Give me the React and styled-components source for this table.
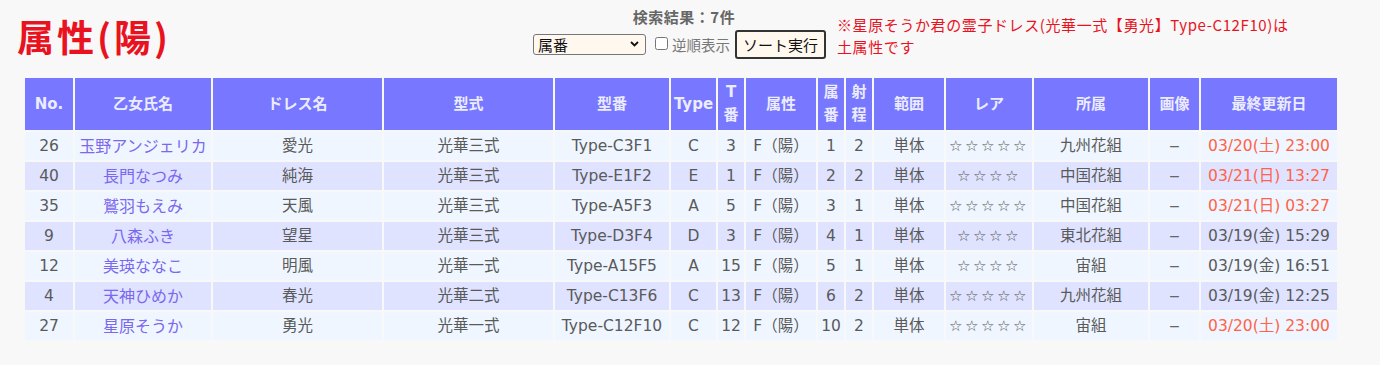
import styled, { createGlobalStyle } from "styled-components";

const headerColor = "#7777ff";
const headerText = "#ececff";
const rowLight = "#eff6ff";
const rowDark = "#dfe3ff";
const cellText = "#5a5a5a";
const nameColor = "#7b68ee";
const dateRed = "#ff6347";
const noteRed = "#e8131f";

const GlobalStyle = createGlobalStyle`
  * { box-sizing: border-box; }
  body {
    margin: 0;
    background: #f8f8f8;
    font-family: "DejaVu Sans", "Noto Sans CJK JP", sans-serif;
  }
`;

const Root = styled.div`
  width: 1380px;
  height: 365px;
  overflow: hidden;
`;

const TopBar = styled.div`
  display: flex;
  height: 76px;
`;

const TitleBox = styled.div`
  width: 533px;
  padding: 13px 0 0 17px;
`;

const Title = styled.h1`
  margin: 0;
  font-family: "Noto Sans CJK JP", sans-serif;
  font-size: 37px;
  line-height: 46px;
  letter-spacing: 3px;
  font-weight: 700;
  color: ${noteRed};
`;

const Controls = styled.div`
  width: 296px;
  display: flex;
  flex-direction: column;
  align-items: center;
  padding-top: 6px;
`;

const ResultCount = styled.div`
  font-family: "Noto Sans CJK JP", sans-serif;
  font-size: 15px;
  line-height: 21px;
  letter-spacing: 0.5px;
  font-weight: 700;
  color: #666;
  padding-left: 6px;
`;

const SortRow = styled.div`
  width: 100%;
  display: flex;
  align-items: center;
  margin-top: 3px;
`;

const SelectWrap = styled.div`
  position: relative;
  width: 113px;
  height: 21px;
  svg {
    position: absolute;
    right: 7px;
    top: 7px;
    pointer-events: none;
  }
`;

const SortSelect = styled.select`
  appearance: none;
  -webkit-appearance: none;
  width: 100%;
  height: 100%;
  padding: 0 0 0 4px;
  border: 1px solid #777;
  border-radius: 3px;
  background: #fff8ef;
  font-family: "Noto Sans CJK JP", sans-serif;
  font-size: 15px;
  line-height: 19px;
  color: #111;
`;

const CheckLabel = styled.label`
  display: flex;
  align-items: center;
  margin-left: 9px;
  font-family: "Noto Sans CJK JP", sans-serif;
  font-size: 14.5px;
  color: #777;
  input {
    width: 13px;
    height: 13px;
    margin: 0 4px 2px 0;
  }
`;

const SortButton = styled.button`
  margin-left: 5px;
  height: 29px;
  padding: 0 6px;
  border: 2px solid #333;
  border-radius: 3px;
  background: #fff8ef;
  font-family: "Noto Sans CJK JP", sans-serif;
  font-size: 15px;
  color: #111;
`;

const Note = styled.div`
  width: 490px;
  margin-left: 8px;
  padding-top: 14px;
  font-family: "Noto Sans CJK JP", sans-serif;
  font-size: 15px;
  line-height: 22px;
  letter-spacing: 0.6px;
  color: ${noteRed};
`;

const Table = styled.table`
  margin-left: 23px;
  width: 1316px;
  table-layout: fixed;
  border-collapse: separate;
  border-spacing: 2px;
`;

const Th = styled.th`
  width: ${(p) => p.$w}px;
  height: 52px;
  padding: 3px 2px;
  background: ${headerColor};
  color: ${headerText};
  font-size: 15px;
  line-height: 23px;
  font-weight: 700;
  text-align: center;
  font-family: "DejaVu Sans", "Noto Sans CJK JP", sans-serif;
`;

const Row = styled.tr`
  background: ${(p) => (p.$odd ? rowDark : rowLight)};
`;

const Td = styled.td`
  height: 28px;
  padding: 0 1px;
  font-size: 15.5px;
  line-height: 20px;
  text-align: center;
  white-space: nowrap;
  overflow: visible;
  color: ${(p) => p.$color || cellText};
`;

const Name = styled.span`
  font-family: "Noto Sans CJK JP", sans-serif;
  font-size: 16px;
  color: ${nameColor};
`;

const Stars = styled.span`
  font-family: "DejaVu Sans", sans-serif;
  font-size: 15px;
  letter-spacing: 2.6px;
  color: #555;
`;

const Dash = styled.span`
  font-family: "DejaVu Sans", sans-serif;
  font-size: 14px;
  color: #666;
`;

const columns = [
  ["No.", 48],
  ["乙女氏名", 136],
  ["ドレス名", 169],
  ["型式", 169],
  ["型番", 114],
  ["Type", 45],
  ["T番", 26],
  ["属性", 70],
  ["属番", 26],
  ["射程", 26],
  ["範囲", 70],
  ["レア", 86],
  ["所属", 114],
  ["画像", 49],
  ["最終更新日", 136],
];

const rows = [
  [26, "玉野アンジェリカ", "愛光", "光華三式", "Type-C3F1", "C", 3, 1, 2, 5, "九州花組", "03/20(土) 23:00", true],
  [40, "長門なつみ", "純海", "光華三式", "Type-E1F2", "E", 1, 2, 2, 4, "中国花組", "03/21(日) 13:27", true],
  [35, "鷲羽もえみ", "天風", "光華三式", "Type-A5F3", "A", 5, 3, 1, 5, "中国花組", "03/21(日) 03:27", true],
  [9, "八森ふき", "望星", "光華三式", "Type-D3F4", "D", 3, 4, 1, 4, "東北花組", "03/19(金) 15:29", false],
  [12, "美瑛ななこ", "明風", "光華一式", "Type-A15F5", "A", 15, 5, 1, 4, "宙組", "03/19(金) 16:51", false],
  [4, "天神ひめか", "春光", "光華二式", "Type-C13F6", "C", 13, 6, 2, 5, "九州花組", "03/19(金) 12:25", false],
  [27, "星原そうか", "勇光", "光華一式", "Type-C12F10", "C", 12, 10, 2, 5, "宙組", "03/20(土) 23:00", true],
];

export default function App() {
  return (
    <Root>
      <GlobalStyle />
      <TopBar>
        <TitleBox>
          <Title>属性(陽)</Title>
        </TitleBox>
        <Controls>
          <ResultCount>検索結果：7件</ResultCount>
          <SortRow>
            <SelectWrap>
              <SortSelect defaultValue="zokuban">
                <option value="zokuban">属番</option>
              </SortSelect>
              <svg width="9" height="6" viewBox="0 0 9 6">
                <path d="M1 1l3.5 3.5L8 1" fill="none" stroke="#111" strokeWidth="1.8" />
              </svg>
            </SelectWrap>
            <CheckLabel>
              <input type="checkbox" />
              逆順表示
            </CheckLabel>
            <SortButton>ソート実行</SortButton>
          </SortRow>
        </Controls>
        <Note>
          ※星原そうか君の霊子ドレス(光華一式【勇光】Type-C12F10)は
          <br />
          土属性です
        </Note>
      </TopBar>
      <Table>
        <thead>
          <tr>
            {columns.map(([label, w]) => (
              <Th key={label} $w={w}>
                {label}
              </Th>
            ))}
          </tr>
        </thead>
        <tbody>
          {rows.map((r, i) => (
            <Row key={r[0]} $odd={i % 2 === 1}>
              <Td>{r[0]}</Td>
              <Td>
                <Name>{r[1]}</Name>
              </Td>
              <Td>{r[2]}</Td>
              <Td>{r[3]}</Td>
              <Td>{r[4]}</Td>
              <Td>{r[5]}</Td>
              <Td>{r[6]}</Td>
              <Td>F（陽）</Td>
              <Td>{r[7]}</Td>
              <Td>{r[8]}</Td>
              <Td>単体</Td>
              <Td>
                <Stars>{"☆".repeat(r[9])}</Stars>
              </Td>
              <Td>{r[10]}</Td>
              <Td>
                <Dash>−</Dash>
              </Td>
              <Td $color={r[12] ? dateRed : cellText}>{r[11]}</Td>
            </Row>
          ))}
        </tbody>
      </Table>
    </Root>
  );
}
